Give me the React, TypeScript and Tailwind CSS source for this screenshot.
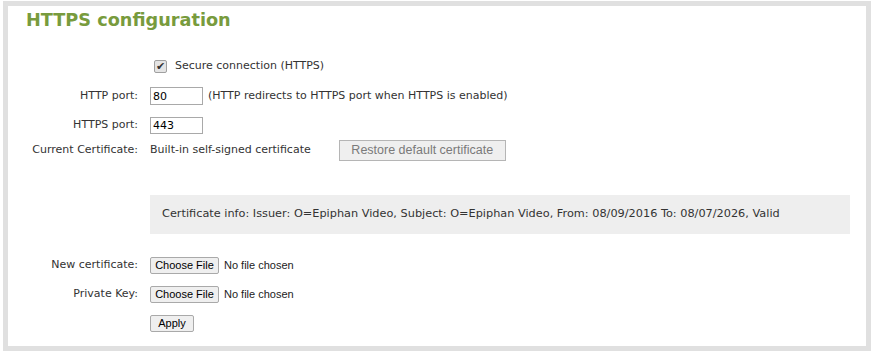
import React from "react";

const body = "font-['DejaVu_Sans',sans-serif]";

function Label({ children }: { children: React.ReactNode }) {
  return <div className="w-[130px] shrink-0 text-right">{children}</div>;
}

function FileRow({ label }: { label: string }) {
  return (
    <div className="flex items-center h-[17px]">
      <Label>{label}</Label>
      <div className="ml-[12px] flex items-center">
        <button className="h-[17px] w-[69px] border border-[#a9a9a9] bg-[#efefef] rounded-[2px] text-[11px] text-black font-['Liberation_Sans',Arial,sans-serif] leading-none">
          Choose File
        </button>
        <span className="ml-[5px] text-[11px] text-[#222] font-['Liberation_Sans',Arial,sans-serif]">No file chosen</span>
      </div>
    </div>
  );
}

export default function App() {
  return (
    <div className="pt-px pl-[3px] bg-white w-[872px] h-[359px]">
      <div className={`w-[868px] h-[350px] border-[5px] border-[#e0e0e0] bg-white ${body} text-[11px] text-[#333]`}>
        <h1 className="pl-[18px] pt-[3px] h-[22px] text-[17.7px] leading-[22px] font-bold text-[#789b3d] font-['DejaVu_Sans',sans-serif]">
          HTTPS configuration
        </h1>

        <div className="mt-[32px] flex items-center h-[13px]">
          <div className="w-[146px] shrink-0" />
          <span className="w-[13px] h-[13px] border border-[#a0a0a0] bg-[#e4e4e4] rounded-[2px] flex items-center justify-center text-[11px] leading-none text-[#333]">
            ✔
          </span>
          <span className="ml-[8px]">Secure connection (HTTPS)</span>
        </div>

        <div className="mt-[14px] flex items-center h-[18px]">
          <Label>HTTP port:</Label>
          <input
            defaultValue="80"
            className="ml-[12px] w-[53px] h-[18px] border border-[#a9a9a9] px-[2px] text-[11px] text-black outline-none"
          />
          <span className="ml-[5px]">(HTTP redirects to HTTPS port when HTTPS is enabled)</span>
        </div>

        <div className="mt-[12px] flex items-center h-[17px]">
          <Label>HTTPS port:</Label>
          <input
            defaultValue="443"
            className="ml-[12px] w-[53px] h-[17px] border border-[#a9a9a9] px-[2px] text-[11px] text-black outline-none"
          />
        </div>

        <div className="mt-[6px] flex items-center h-[21px]">
          <Label>Current Certificate:</Label>
          <span className="ml-[12px]">Built-in self-signed certificate</span>
          <button
            disabled
            className="ml-[28px] h-[21px] w-[167px] border border-[#b5b5b5] bg-[#efefef] text-[12.5px] text-[#7a7a7a] font-['Liberation_Sans',Arial,sans-serif] leading-none"
          >
            Restore default certificate
          </button>
        </div>

        <div className="mt-[34px] ml-[142px] w-[700px] h-[39px] bg-[#eeeeee] flex items-center pl-[12px] text-[11.3px]">
          Certificate info: Issuer: O=Epiphan Video, Subject: O=Epiphan Video, From: 08/09/2016 To: 08/07/2026, Valid
        </div>

        <div className="mt-[23px] flex flex-col gap-[12px]">
          <FileRow label="New certificate:" />
          <FileRow label="Private Key:" />
          <div className="flex items-center h-[17px]">
            <div className="w-[142px] shrink-0" />
            <button className="h-[17px] w-[44px] border border-[#a9a9a9] bg-[#efefef] rounded-[2px] text-[11px] text-black font-['Liberation_Sans',Arial,sans-serif] leading-none">
              Apply
            </button>
          </div>
        </div>
      </div>
    </div>
  );
}
